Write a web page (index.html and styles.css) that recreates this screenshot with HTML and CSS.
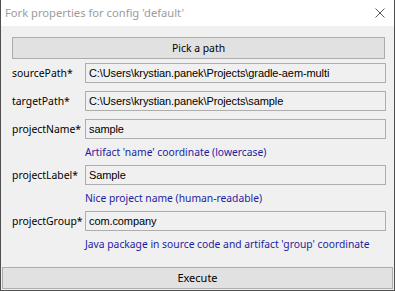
FILE: index.html
```html
<!DOCTYPE html>
<html>
<head>
<meta charset="utf-8">
<link rel="stylesheet" href="styles.css">
</head>
<body>
<div class="window">
  <div class="titlebar">
    <span class="title">Fork properties for config 'default'</span>
    <svg class="close" width="10" height="10" viewBox="0 0 10 10"><path d="M0.5 0.5 L9.5 9.5 M9.5 0.5 L0.5 9.5" stroke="#5a5a5a" stroke-width="1" fill="none"/></svg>
  </div>
  <div class="content">
    <div class="btn pick">Pick a path</div>
    <div class="form">
      <div class="row r1"><span class="label">sourcePath*</span><div class="field">C:\Users\krystian.panek\Projects\gradle-aem-multi</div></div>
      <div class="row r2"><span class="label">targetPath*</span><div class="field">C:\Users\krystian.panek\Projects\sample</div></div>
      <div class="row r3"><span class="label">projectName*</span><div class="field">sample</div></div>
      <div class="hint">Artifact 'name' coordinate (lowercase)</div>
      <div class="row"><span class="label">projectLabel*</span><div class="field">Sample</div></div>
      <div class="hint">Nice project name (human-readable)</div>
      <div class="row"><span class="label">projectGroup*</span><div class="field">com.company</div></div>
      <div class="hint last">Java package in source code and artifact 'group' coordinate</div>
    </div>
    <div class="btn execute">Execute</div>
  </div>
</div>
</body>
</html>
```

FILE: styles.css
```css
* { box-sizing: border-box; }
html, body { margin: 0; padding: 0; }
body {
  width: 395px;
  height: 291px;
  font-family: "Noto Sans", "Open Sans", sans-serif;
  font-size: 10.1px;
  color: #000;
  overflow: hidden;
}
.window {
  width: 395px;
  height: 291px;
  border: 1px solid #4f4f4f;
  border-top: none;
  display: flex;
  flex-direction: column;
  background: #f0f0f0;
}
.titlebar {
  height: 26px;
  flex: none;
  background: #fff;
  display: flex;
  align-items: center;
  justify-content: space-between;
  padding: 0 9px 0 4px;
}
.title {
  color: #9b9b9b;
  font-size: 11.2px;
  line-height: 16px;
}
.close { display: block; }
.content {
  flex: 1;
  display: flex;
  flex-direction: column;
  padding: 11px 0 1px 1px;
}
.btn {
  flex: none;
  background: #e1e1e1;
  border: 1px solid #adadad;
  height: 22px;
  display: flex;
  align-items: center;
  justify-content: center;
  line-height: 16px;
  font-size: 11px;
}
.pick {
  margin-left: 10px;
  width: 373px;
  font-size: 10.4px;
}
.form {
  display: flex;
  flex-direction: column;
  padding-left: 10px;
  margin-top: 4px;
}
.row {
  display: flex;
  align-items: center;
  height: 20px;
}
.r2, .r3 { margin-top: 8px; }
.label {
  width: 73px;
  line-height: 16px;
  font-size: 10.4px;
}
.field {
  width: 301px;
  height: 20px;
  border: 1px solid #adadad;
  background: #f0f0f0;
  padding-left: 3px;
  line-height: 18px;
  white-space: nowrap;
  overflow: hidden;
  font-family: "Liberation Sans", Arial, sans-serif;
  font-size: 11px;
  letter-spacing: -0.1px;
}
.hint {
  height: 26px;
  padding-left: 73px;
  color: #1c1ca0;
  line-height: 26px;
  font-size: 10.3px;
  white-space: nowrap;
}
.hint.last { height: 36px; padding-bottom: 10px; }
.execute {
  width: 391px;
}
```
